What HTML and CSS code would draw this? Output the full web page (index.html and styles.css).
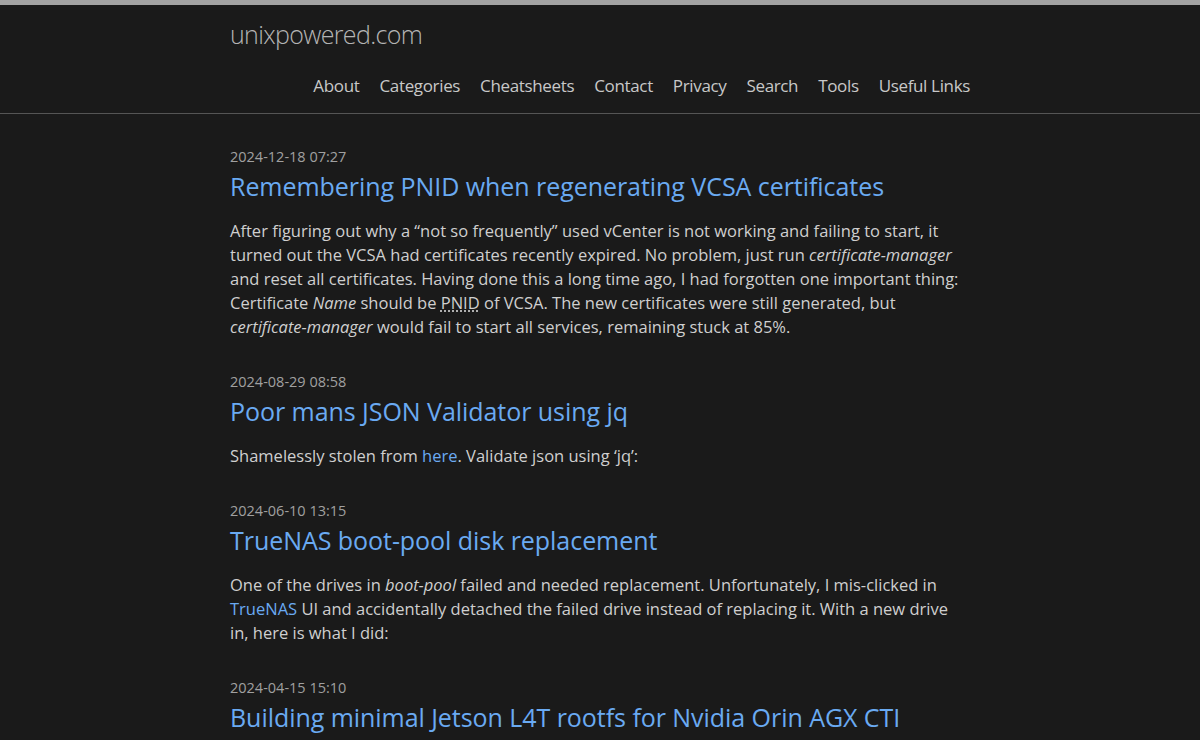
FILE: index.html
```html
<!DOCTYPE html>
<html lang="en">
<head>
<meta charset="utf-8">
<title>unixpowered.com</title>
<link rel="stylesheet" href="styles.css">
</head>
<body>
<div class="topbar"></div>
<header class="site-header">
  <div class="container">
    <div class="site-title">unixpowered.com</div>
    <nav class="nav">
      <a href="#">About</a>
      <a href="#">Categories</a>
      <a href="#">Cheatsheets</a>
      <a href="#">Contact</a>
      <a href="#">Privacy</a>
      <a href="#">Search</a>
      <a href="#">Tools</a>
      <a href="#">Useful Links</a>
    </nav>
  </div>
</header>
<main class="container posts">
  <article class="post">
    <div class="date">2024-12-18 07:27</div>
    <h2 class="post-title"><a href="#">Remembering PNID when regenerating VCSA certificates</a></h2>
    <p>After figuring out why a “not so frequently” used vCenter is not working and failing to start, it turned out the VCSA had certificates recently expired. No problem, just run <em>certificate-manager</em> and reset all certificates. Having done this a long time ago, I had forgotten one important thing: Certificate <em>Name</em> should be <abbr title="Primary Network Identifier">PNID</abbr> of VCSA. The new certificates were still generated, but <em>certificate-manager</em> would fail to start all services, remaining stuck at 85%.</p>
  </article>
  <article class="post">
    <div class="date">2024-08-29 08:58</div>
    <h2 class="post-title"><a href="#">Poor mans JSON Validator using jq</a></h2>
    <p>Shamelessly stolen from <a href="#">here</a>. Validate json using ‘jq’:</p>
  </article>
  <article class="post">
    <div class="date">2024-06-10 13:15</div>
    <h2 class="post-title"><a href="#">TrueNAS boot-pool disk replacement</a></h2>
    <p>One of the drives in <em>boot-pool</em> failed and needed replacement. Unfortunately, I mis-clicked in <a href="#">TrueNAS</a> UI and accidentally detached the failed drive instead of replacing it. With a new drive in, here is what I did:</p>
  </article>
  <article class="post">
    <div class="date">2024-04-15 15:10</div>
    <h2 class="post-title"><a href="#">Building minimal Jetson L4T rootfs for Nvidia Orin AGX CTI</a></h2>
  </article>
</main>
</body>
</html>
```

FILE: styles.css
```css
html, body {
  margin: 0;
  padding: 0;
}
body {
  background: #1a1a1a;
  color: #cfcfcf;
  font-family: "Open Sans", "Noto Sans", sans-serif;
  font-size: 16.5px;
  line-height: 24px;
  overflow: hidden;
}
a {
  color: #6aaaf2;
  text-decoration: none;
}
.topbar {
  height: 5px;
  background: #a3a3a3;
}
.container {
  width: 740px;
  margin: 0 auto;
}
.site-header {
  border-bottom: 1px solid #555;
  padding: 11px 0 15px;
}
.site-title {
  font-weight: 300;
  font-size: 25px;
  line-height: 36px;
  color: #b4b4b4;
  letter-spacing: -0.65px;
}
.nav {
  display: flex;
  justify-content: flex-end;
  gap: 20px;
  margin-top: 22px;
  font-size: 17px;
  line-height: 24px;
  letter-spacing: -0.35px;
}
.nav a {
  color: #c8c8c8;
}
.posts {
  padding-top: 33px;
}
.post {
  margin-bottom: 33px;
}
.date {
  font-size: 14.5px;
  line-height: 20px;
  color: #a0a0a0;
}
.post-title {
  margin: 2px 0 0;
  font-size: 25px;
  line-height: 34px;
  font-weight: 400;
  letter-spacing: -0.05px;
}
.post p {
  margin: 16px 0 0;
}
abbr {
  text-decoration: underline dotted;
  text-underline-offset: 2px;
}
```
